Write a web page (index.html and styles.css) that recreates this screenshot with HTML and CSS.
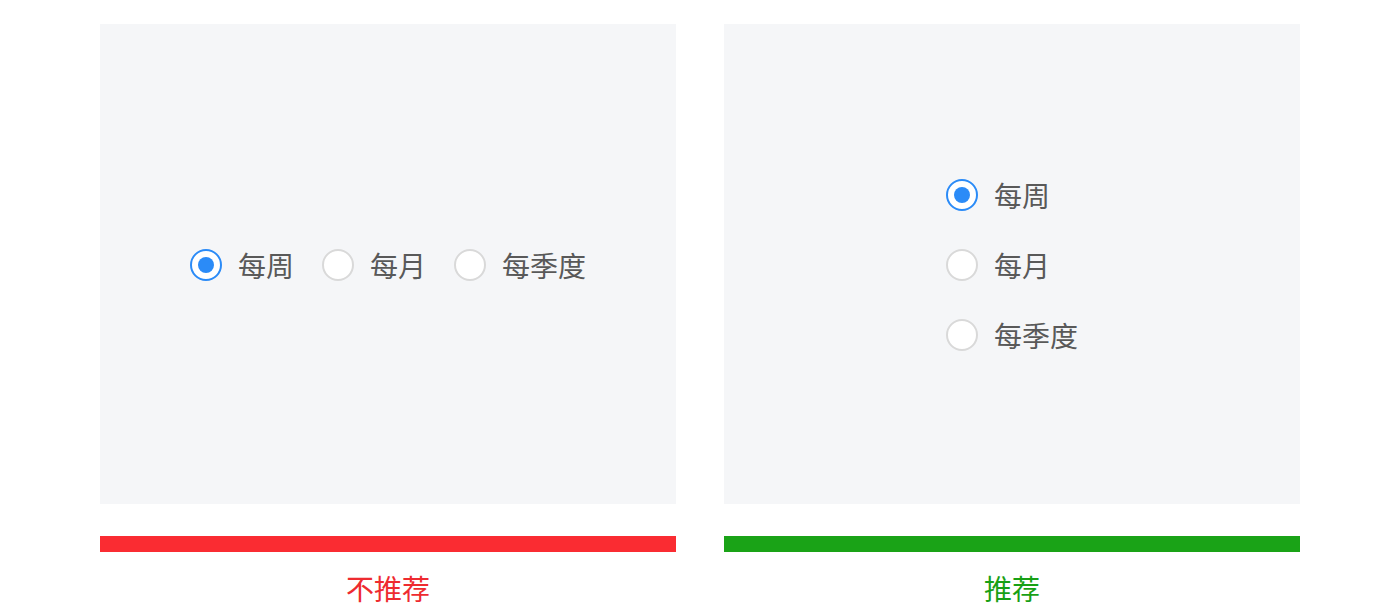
FILE: index.html
```html
<!DOCTYPE html>
<html lang="zh-CN">
<head>
    <meta charset="UTF-8">
    <meta name="viewport" content="width=device-width, initial-scale=1.0">
    <title>单选框排列</title>
    <link rel="stylesheet" href="styles.css">
</head>
<body>

    <div class="compare">
        <div class="case">
            <div class="panel">
                <div class="radio-group">
                    <label class="radio checked"><span class="dot"></span>每周</label>
                    <label class="radio"><span class="dot"></span>每月</label>
                    <label class="radio"><span class="dot"></span>每季度</label>
                </div>
            </div>
            <div class="bar bad"></div>
            <div class="verdict bad">不推荐</div>
        </div>

        <div class="case">
            <div class="panel">
                <div class="radio-group vertical">
                    <label class="radio checked"><span class="dot"></span>每周</label>
                    <label class="radio"><span class="dot"></span>每月</label>
                    <label class="radio"><span class="dot"></span>每季度</label>
                </div>
            </div>
            <div class="bar good"></div>
            <div class="verdict good">推荐</div>
        </div>
    </div>

</body>
</html>
```

FILE: styles.css
```css
body {
    margin: 0;
    font-family: "Noto Sans CJK SC", "Noto Sans", sans-serif;
    background: #fff;
}
.compare {
    display: flex;
    gap: 48px;
    padding: 24px 100px 0;
}
.case {
    width: 576px;
}
.panel {
    height: 480px;
    background-color: #f5f6f8;
    display: flex;
    align-items: center;
    justify-content: center;
    padding-top: 2px;
    box-sizing: border-box;
}
.radio-group {
    display: flex;
    gap: 28px;
}
.radio-group.vertical {
    flex-direction: column;
    gap: 30px;
}
.radio {
    display: flex;
    align-items: center;
    gap: 16px;
    font-size: 28px;
    line-height: 40px;
    color: #595959;
}
.dot {
    width: 32px;
    height: 32px;
    box-sizing: border-box;
    border: 2px solid #d9d9d9;
    border-radius: 50%;
    background: #fff;
    position: relative;
}
.radio.checked .dot {
    border-color: #2b8bf7;
}
.radio.checked .dot::after {
    content: "";
    position: absolute;
    left: 6px;
    top: 6px;
    width: 16px;
    height: 16px;
    border-radius: 50%;
    background: #2b8bf7;
}
.bar {
    height: 16px;
    margin-top: 32px;
}
.bar.bad {
    background-color: #fa2c32;
}
.bar.good {
    background-color: #1aa317;
}
.verdict {
    margin-top: 16px;
    text-align: center;
    font-size: 28px;
    line-height: 40px;
}
.verdict.bad {
    color: #ee2b30;
}
.verdict.good {
    color: #18a015;
}
```
